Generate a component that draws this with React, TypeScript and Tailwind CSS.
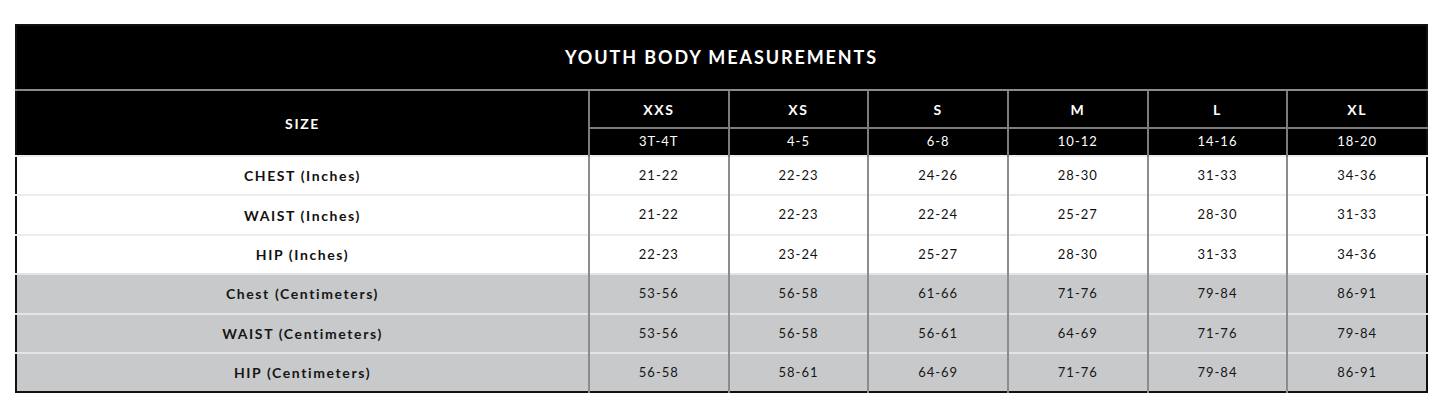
const sizes = [
  { name: "XXS", range: "3T-4T" },
  { name: "XS", range: "4-5" },
  { name: "S", range: "6-8" },
  { name: "M", range: "10-12" },
  { name: "L", range: "14-16" },
  { name: "XL", range: "18-20" },
];

const rows = [
  { label: "CHEST (Inches)", values: ["21-22", "22-23", "24-26", "28-30", "31-33", "34-36"], shaded: false },
  { label: "WAIST (Inches)", values: ["21-22", "22-23", "22-24", "25-27", "28-30", "31-33"], shaded: false },
  { label: "HIP (Inches)", values: ["22-23", "23-24", "25-27", "28-30", "31-33", "34-36"], shaded: false },
  { label: "Chest (Centimeters)", values: ["53-56", "56-58", "61-66", "71-76", "79-84", "86-91"], shaded: true },
  { label: "WAIST (Centimeters)", values: ["53-56", "56-58", "56-61", "64-69", "71-76", "79-84"], shaded: true },
  { label: "HIP (Centimeters)", values: ["56-58", "58-61", "64-69", "71-76", "79-84", "86-91"], shaded: true },
];

export default function App() {
  return (
    <div className="bg-white pt-[24px] pl-[15px] pr-[17px] pb-[17px] font-['Lato',sans-serif]">
      <table className="w-full table-fixed border-collapse border-2 border-[#111]">
        <colgroup>
          <col className="w-[573px]" />
          {sizes.map((s) => (
            <col key={s.name} />
          ))}
        </colgroup>
        <thead>
          {/* TITLE */}
          <tr>
            <th
              colSpan={7}
              className="h-[65px] bg-black text-white text-[18px] font-bold tracking-[1.9px] border-b-2 border-[#8a8a8a]"
            >
              YOUTH BODY MEASUREMENTS
            </th>
          </tr>
          {/* SIZE NAMES */}
          <tr className="bg-black text-white">
            <th rowSpan={2} className="text-[14px] font-bold tracking-[1.6px]">
              SIZE
            </th>
            {sizes.map((s) => (
              <th
                key={s.name}
                className="h-[38px] border-l-2 border-b-2 border-[#7c7c7c] text-[14px] font-bold tracking-[1.6px]"
              >
                {s.name}
              </th>
            ))}
          </tr>
          <tr className="bg-black text-white">
            {sizes.map((s) => (
              <th
                key={s.range}
                className="h-[28px] border-l-2 border-[#7c7c7c] text-[13px] font-normal tracking-[1px]"
              >
                {s.range}
              </th>
            ))}
          </tr>
        </thead>
        <tbody>
          {rows.map((r) => (
            <tr
              key={r.label}
              className={
                r.shaded
                  ? "bg-[#c8c9cb] text-[#161616] border-t-2 border-[#e4e4e4]"
                  : "bg-white text-[#111] border-t-2 border-[#ececec]"
              }
            >
              <td className="h-[39.4px] text-center text-[14px] font-bold tracking-[1.6px]">{r.label}</td>
              {r.values.map((v, i) => (
                <td
                  key={i}
                  className="border-l-2 border-l-[#8c8c8c] text-center text-[13px] tracking-[1px]"
                >
                  {v}
                </td>
              ))}
            </tr>
          ))}
        </tbody>
      </table>
    </div>
  );
}
